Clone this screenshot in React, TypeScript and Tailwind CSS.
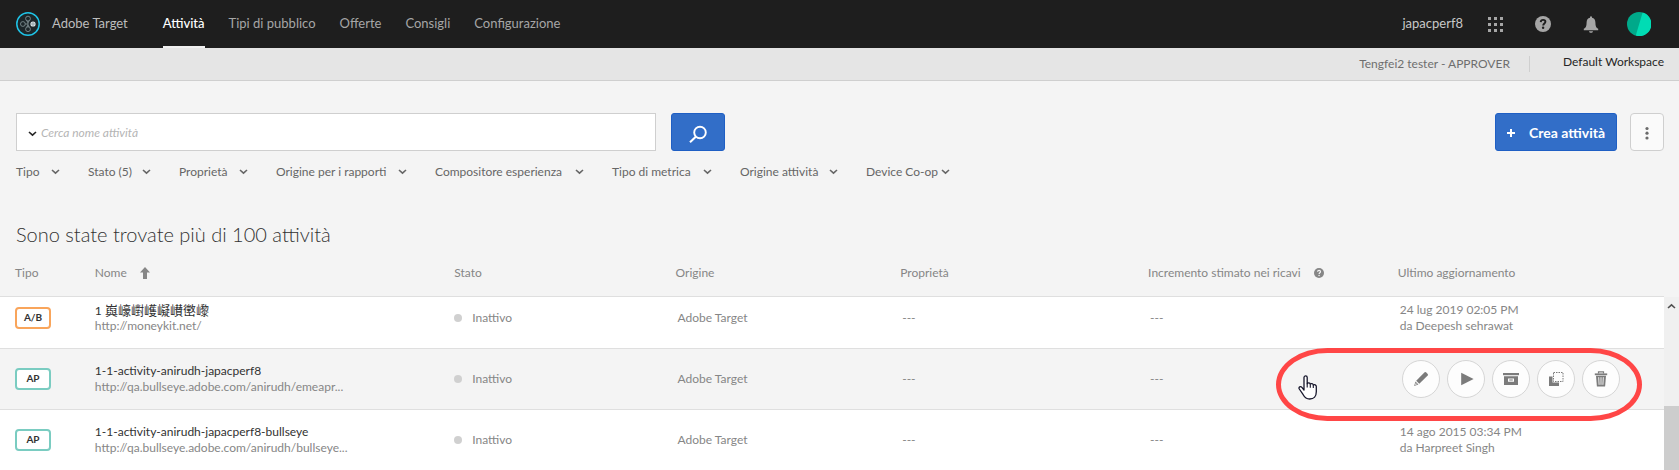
import type { ReactNode } from "react";

const NAV = ["Attività", "Tipi di pubblico", "Offerte", "Consigli", "Configurazione"];

const FILTERS = [
  { label: "Tipo", width: "w-[44px]" },
  { label: "Stato (5)", width: "w-[63px]" },
  { label: "Proprietà", width: "w-[69px]" },
  { label: "Origine per i rapporti", width: "w-[131px]" },
  { label: "Compositore esperienza", width: "w-[149px]" },
  { label: "Tipo di metrica", width: "w-[100px]" },
  { label: "Origine attività", width: "w-[98px]" },
  { label: "Device Co-op", width: "w-[84px]" },
];

type Activity = {
  kind: "A/B" | "AP";
  name: ReactNode;
  url: string;
  updated: string;
  author: string;
  hovered?: boolean;
};

const ACTIVITIES: Activity[] = [
  {
    kind: "A/B",
    name: (
      <>
        1 <span className="text-[13px]">㠘㠙㠚㠛㠜㠝㠞㠟</span>
      </>
    ),
    url: "http://moneykit.net/",
    updated: "24 lug 2019 02:05 PM",
    author: "da Deepesh sehrawat",
  },
  {
    kind: "AP",
    name: "1-1-activity-anirudh-japacperf8",
    url: "http://qa.bullseye.adobe.com/anirudh/emeapr...",
    updated: "",
    author: "",
    hovered: true,
  },
  {
    kind: "AP",
    name: "1-1-activity-anirudh-japacperf8-bullseye",
    url: "http://qa.bullseye.adobe.com/anirudh/bullseye...",
    updated: "14 ago 2015 03:34 PM",
    author: "da Harpreet Singh",
  },
];

function Chevron({ className = "" }: { className?: string }) {
  return (
    <svg viewBox="0 0 9 6" className={`h-[6px] w-[9px] shrink-0 ${className}`} aria-hidden="true">
      <path d="M1 1l3.5 3.2L8 1" fill="none" stroke="currentColor" strokeWidth="1.6" />
    </svg>
  );
}

function TargetLogo() {
  return (
    <svg viewBox="0 0 24 24" className="size-6" fill="none" aria-hidden="true">
      <circle cx="12" cy="12" r="11.2" fill="#1c2629" stroke="#1fc3e6" strokeWidth="1.5" />
      <g stroke="#7d8c90" strokeWidth="0.9">
        <circle cx="12" cy="6.6" r="2.4" />
        <circle cx="12" cy="17.2" r="2.4" />
        <circle cx="6.9" cy="12" r="2.4" />
        <path d="M9.3 12h2.7M12 9v5.8M10.6 8.6l1.4 2 1.4-2M10.6 15.2l1.4-2 1.4 2" />
      </g>
      <circle cx="17" cy="12" r="2.6" fill="#dfe8ea" />
      <circle cx="17" cy="12" r="1.2" stroke="#6f8085" strokeWidth="0.7" />
    </svg>
  );
}

function AppsIcon() {
  const at = [0, 6, 12];
  return (
    <svg viewBox="0 0 15 15" className="size-[15px]" fill="currentColor" aria-hidden="true">
      {at.map((y) => at.map((x) => <rect key={`${x}-${y}`} x={x} y={y} width="3" height="3" />))}
    </svg>
  );
}

function HelpIcon({ className, mark }: { className: string; mark: string }) {
  return (
    <svg viewBox="0 0 16 16" className={className} aria-hidden="true">
      <circle cx="8" cy="8" r="8" fill="currentColor" />
      <path
        d="M5.7 6.1C5.8 4.6 6.8 3.9 8.1 3.9c1.4 0 2.3.8 2.3 1.9 0 1.7-2.2 1.8-2.2 3.7"
        fill="none"
        stroke={mark}
        strokeWidth="1.9"
      />
      <circle cx="8.1" cy="11.8" r="1.2" fill={mark} />
    </svg>
  );
}

function BellIcon() {
  return (
    <svg viewBox="0 0 16 17" className="h-[17px] w-4" fill="currentColor" aria-hidden="true">
      <path d="M7 .4h2v1.4c2.2.5 3.4 2.2 3.4 4.6 0 3.6.8 5.4 2.8 6.4v1.4H.8v-1.4c2-1 2.8-2.8 2.8-6.4 0-2.4 1.2-4.1 3.4-4.6z" />
      <path d="M6 15.2h4c-.2 1-.9 1.6-2 1.6s-1.8-.6-2-1.6z" />
    </svg>
  );
}

function Avatar() {
  return (
    <svg viewBox="0 0 24 24" className="size-6" aria-hidden="true">
      <circle cx="12" cy="12" r="12" fill="#00a98a" />
      <path d="M15.6.55A12 12 0 1 1 8.8 23.56z" fill="#00dcb4" />
    </svg>
  );
}

function PencilIcon() {
  return (
    <svg viewBox="0 0 16 16" className="size-4" fill="currentColor" aria-hidden="true">
      <path d="M11.6 1.3a1 1 0 0 1 1.4 0l1.7 1.7a1 1 0 0 1 0 1.4L6.300 12.800 3.200 9.700z" />
      <path d="M2.5 10.600l2.900 2.900-4.300 1.400zM2.800 12l-.8 2 2-.7z" fillRule="evenodd" />
    </svg>
  );
}

function PlayIcon() {
  return (
    <svg viewBox="0 0 16 16" className="size-4" fill="currentColor" aria-hidden="true">
      <path d="M3.2 1.8L15.6 8 3.2 14.2z" />
    </svg>
  );
}

function ArchiveIcon() {
  return (
    <svg viewBox="0 0 16 16" className="size-4" fill="currentColor" aria-hidden="true">
      <path d="M0 2h16v2.200H0z" />
      <path fillRule="evenodd" d="M1 5.200h14V14H1zM5 7.500v3.200h6V7.500zM6.200 8.600h3.600v1H6.200z" />
    </svg>
  );
}

function CopyIcon() {
  return (
    <svg viewBox="0 0 16 16" className="size-4" aria-hidden="true">
      <path d="M1 5.500h3.500v6H11V15H1z" fill="currentColor" />
      <rect x="5.5" y="1.5" width="9.5" height="9" fill="none" stroke="currentColor" strokeDasharray="1.5 1" />
    </svg>
  );
}

function TrashIcon() {
  return (
    <svg viewBox="0 0 16 16" className="size-4" aria-hidden="true">
      <path d="M5.5 2.500V.8h5v1.700" fill="none" stroke="currentColor" strokeWidth="1.2" />
      <path d="M1.8 2.400h12.400v1.800H1.800z" fill="currentColor" />
      <path d="M3 4.800h10l-.9 10.600H3.900z" fill="currentColor" />
      <path d="M5.700 6.200l.4 7.600M8 6.200v7.600M10.300 6.200l-.4 7.600" stroke="#fff" strokeWidth="0.9" />
    </svg>
  );
}

function HandCursor() {
  return (
    <svg viewBox="0 0 20 25" className="absolute -left-[100px] top-[26px] h-[25px] w-5" aria-hidden="true">
      <path
        d="M6 15V2.600c0-2.200 3.200-2.200 3.200 0v6.200c.6-1.400 2.900-1.200 3.100.4.800-1 2.800-.7 3 .8 1.100-.9 3 0 3 1.500v5.200c0 4.600-2.400 7.300-6.600 7.300-3.300 0-4.900-1.300-6.500-4.300L1.300 14c-1-1.900 1.200-3.100 2.600-1.600z"
        fill="#fff"
        stroke="#16162b"
        strokeWidth="1.3"
        strokeLinejoin="round"
      />
      <path d="M9.2 8.500v4M12.300 9.200v3.500M15.300 10v3" stroke="#16162b" strokeWidth="1.1" />
    </svg>
  );
}

function ActionButton({ label, children }: { label: string; children: ReactNode }) {
  return (
    <button
      type="button"
      aria-label={label}
      className="flex size-[38px] items-center justify-center rounded-full border border-[#d6d6d6] bg-[#fdfdfd] text-[#7b7b7b]"
    >
      {children}
    </button>
  );
}

function RowActions() {
  return (
    <div className="flex gap-[7px] pl-[4px]">
      <ActionButton label="Modifica"><PencilIcon /></ActionButton>
      <ActionButton label="Attiva"><PlayIcon /></ActionButton>
      <ActionButton label="Archivia"><ArchiveIcon /></ActionButton>
      <ActionButton label="Copia"><CopyIcon /></ActionButton>
      <ActionButton label="Elimina"><TrashIcon /></ActionButton>
    </div>
  );
}

function ActivityRow({ item, first, last }: { item: Activity; first: boolean; last: boolean }) {
  const height = first ? "h-[52px]" : "h-[61px]";
  const cell = first ? "pb-[9px]" : "";
  const badge = item.kind === "A/B" ? "border-[#f9a55b]" : "border-[#7accc1]";
  return (
    <tr
      className={`${height} ${last ? "" : "border-b border-[#dfdfdf]"} ${item.hovered ? "bg-[#f4f4f4]" : "bg-white"}`}
    >
      <td className={`pl-[15px] ${cell}`}>
        <span
          className={`flex h-[22px] w-9 items-center justify-center rounded-[4px] border-2 bg-white text-[10px] font-bold text-[#323232] ${badge}`}
        >
          {item.kind}
        </span>
      </td>
      <td className={`leading-4 whitespace-nowrap ${cell}`}>
        <div className="h-4 text-[#323232]">{item.name}</div>
        <div>{item.url}</div>
      </td>
      <td className={cell}>
        <span className="flex items-center gap-[10px]">
          <span className="size-2 rounded-full bg-[#d0d0d0]" />
          Inattivo
        </span>
      </td>
      <td className={`pl-[2px] ${cell}`}>Adobe Target</td>
      <td className={`pl-[2px] ${cell}`}>---</td>
      <td className={`pl-[2px] ${cell}`}>---</td>
      <td className={`relative leading-4 whitespace-nowrap ${cell}`}>
        {item.hovered ? (
          <>
            <RowActions />
            <div className="pointer-events-none absolute -left-[122px] -top-px h-[73px] w-[366px] rounded-[52px/37px] border-5 border-[#ff4646]" />
            <HandCursor />
          </>
        ) : (
          <div className="pl-[2px]">
            <div>{item.updated}</div>
            <div>{item.author}</div>
          </div>
        )}
      </td>
    </tr>
  );
}

export default function App() {
  return (
    <div className="min-h-screen bg-[#f4f4f4] font-['Lato','Noto_Sans_CJK_SC',sans-serif] text-[12px] text-[#868686]">
      <header className="flex h-12 items-center bg-[#1e1e1e] px-4 text-[13px]">
        <TargetLogo />
        <span className="ml-3 text-[#bdbdbd]">Adobe Target</span>
        <nav className="ml-[35px] flex h-full gap-6">
          {NAV.map((label, i) => (
            <a
              key={label}
              href="#"
              className={
                i === 0
                  ? "flex items-center border-b-2 border-t-2 border-b-[#f0f0f0] border-t-transparent font-medium text-white"
                  : "flex items-center text-[#a6a6a6]"
              }
            >
              {label}
            </a>
          ))}
        </nav>
        <div className="ml-auto flex items-center text-[#a6a6a6]">
          <span className="mr-[8px] text-[#c8c8c8]">japacperf8</span>
          <button type="button" aria-label="Soluzioni" className="flex w-12 justify-center"><AppsIcon /></button>
          <button type="button" aria-label="Aiuto" className="flex w-12 justify-center">
            <HelpIcon className="size-4" mark="#1e1e1e" />
          </button>
          <button type="button" aria-label="Notifiche" className="flex w-12 justify-center"><BellIcon /></button>
          <button type="button" aria-label="Profilo" className="flex w-12 justify-center"><Avatar /></button>
        </div>
      </header>

      <div className="flex h-[33px] items-center justify-end border-b border-[#cfcfcf] bg-[#e5e5e5] pr-[15px]">
        <span className="mr-[19px] text-[#6e6e6e]">Tengfei2 tester - APPROVER</span>
        <span className="h-4 w-px bg-[#cfcfcf]" />
        <a href="#" className="ml-[33px] pb-[4px] text-[#252525]">Default Workspace</a>
      </div>

      <main className="pt-8">
        <form className="flex h-[38px] px-4 pr-[15px]">
          <div className="flex w-[640px] items-center border border-[#cfcfcf] bg-white pl-[11px]">
            <button type="button" aria-label="Ambito di ricerca" className="pt-[3px] text-[#252525]"><Chevron /></button>
            <input
              type="text"
              aria-label="Cerca nome attività"
              placeholder="Cerca nome attività"
              className="h-full min-w-0 flex-1 pl-[4px] outline-none placeholder:italic placeholder:text-[#b5b5b5]"
            />
          </div>
          <button
            type="submit"
            aria-label="Cerca"
            className="ml-[15px] flex w-[54px] items-center justify-center rounded-[3px] border border-[#1f5fc4] bg-[#326ec8] pt-[3px] text-white"
          >
            <svg viewBox="0 0 18 18" className="size-[18px]" fill="none" stroke="currentColor" aria-hidden="true">
              <circle cx="11" cy="7.5" r="5.8" strokeWidth="1.9" />
              <path d="M6.8 11.800L1 17.200" strokeWidth="2.1" />
            </svg>
          </button>
          <button
            type="button"
            className="ml-auto flex w-[122px] items-center justify-center gap-[14px] rounded-[3px] border border-[#1f5fc4] bg-[#326ec8] pt-px text-[14px] font-bold text-white"
          >
            <svg viewBox="0 0 8 8" className="size-2" aria-hidden="true">
              <path d="M4 0v8M0 4h8" stroke="currentColor" strokeWidth="2" />
            </svg>
            Crea attività
          </button>
          <button
            type="button"
            aria-label="Altre azioni"
            className="ml-[13px] flex w-[34px] items-center justify-center rounded-[4px] border border-[#cfcfcf] bg-[#fafafa] pt-[2px] text-[#6b6b6b]"
          >
            <svg viewBox="0 0 4 14" className="h-[14px] w-1" fill="currentColor" aria-hidden="true">
              <circle cx="2" cy="2.5" r="1.6" />
              <circle cx="2" cy="7.2" r="1.6" />
              <circle cx="2" cy="12" r="1.6" />
            </svg>
          </button>
        </form>

        <div className="mt-[11px] flex h-5 gap-7 px-4 text-[#666666]">
          {FILTERS.map((f) => (
            <button
              key={f.label}
              type="button"
              className={`flex shrink-0 items-center justify-between whitespace-nowrap ${f.width}`}
            >
              {f.label}
              <Chevron />
            </button>
          ))}
        </div>

        <h1 className="mt-[38px] px-4 text-[20px] leading-7 font-light text-[#323232]">
          Sono state trovate più di 100 attività
        </h1>

        <div className="mt-[3px] flex">
          <table className="min-w-0 flex-1 table-fixed border-collapse text-left">
            <colgroup>
              <col className="w-[5.7%]" />
              <col className="w-[21.6%]" />
              <col className="w-[13.3%]" />
              <col className="w-[13.5%]" />
              <col className="w-[14.9%]" />
              <col className="w-[15%]" />
              <col />
            </colgroup>
            <thead>
              <tr className="h-[45px] border-b border-[#dfdfdf] whitespace-nowrap">
                <th className="pl-[15px] font-normal">Tipo</th>
                <th className="font-normal">
                  <button type="button" className="flex items-center gap-[13px]">
                    Nome
                    <svg viewBox="0 0 10 12" className="h-3 w-[10px]" fill="currentColor" aria-hidden="true">
                      <path d="M5 0l5 5.500H7V12H3V5.500H0z" />
                    </svg>
                  </button>
                </th>
                <th className="font-normal">Stato</th>
                <th className="font-normal">Origine</th>
                <th className="font-normal">Proprietà</th>
                <th className="font-normal">
                  <span className="flex items-center gap-[13px]">
                    Incremento stimato nei ricavi
                    <HelpIcon className="size-[10px]" mark="#f4f4f4" />
                  </span>
                </th>
                <th className="font-normal">Ultimo aggiornamento</th>
              </tr>
            </thead>
            <tbody>
              {ACTIVITIES.map((item, i) => (
                <ActivityRow key={item.url} item={item} first={i === 0} last={i === ACTIVITIES.length - 1} />
              ))}
            </tbody>
          </table>
          <div className="mt-[46px] flex w-[15px] flex-col bg-[#f0f0f0]">
            <button type="button" aria-label="Scorri in alto" className="flex h-[17px] items-center justify-center text-[#505050]">
              <Chevron className="rotate-180" />
            </button>
            <div className="mt-[92px] flex-1 bg-[#cdcdcd]" />
          </div>
        </div>
      </main>
    </div>
  );
}
